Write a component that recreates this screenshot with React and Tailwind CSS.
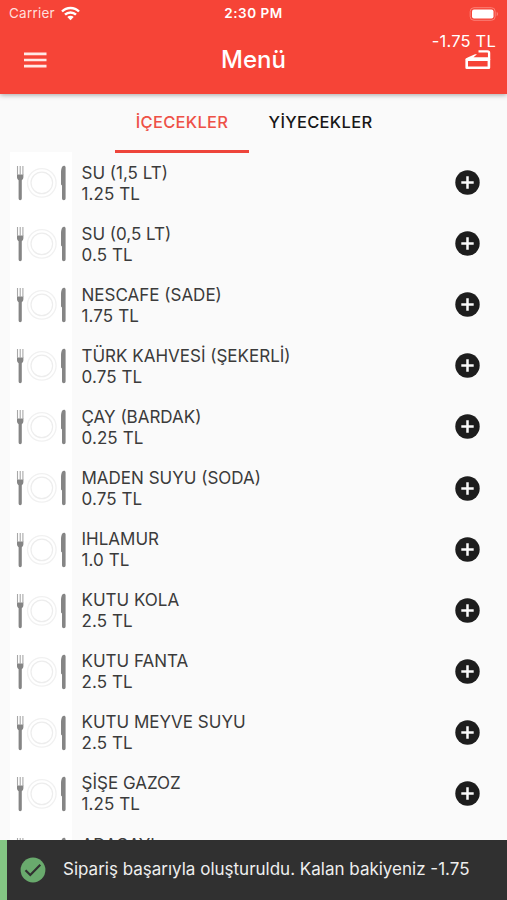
const drinks = [
  ['SU (1,5 LT)', '1.25 TL'],
  ['SU (0,5 LT)', '0.5 TL'],
  ['NESCAFE (SADE)', '1.75 TL'],
  ['TÜRK KAHVESİ (ŞEKERLİ)', '0.75 TL'],
  ['ÇAY (BARDAK)', '0.25 TL'],
  ['MADEN SUYU (SODA)', '0.75 TL'],
  ['IHLAMUR', '1.0 TL'],
  ['KUTU KOLA', '2.5 TL'],
  ['KUTU FANTA', '2.5 TL'],
  ['KUTU MEYVE SUYU', '2.5 TL'],
  ['ŞİŞE GAZOZ', '1.25 TL'],
  ['ADAÇAYI', ''],
];

function PlateImage() {
  return (
    <svg className="h-full w-[62px] shrink-0 bg-white" viewBox="0 0 62 61" fill="none">
      <g fill="#858585">
        <path d="M7 22.500h6.400v2.500c0 1.800-.9 2.800-1.600 3.200V46.500q0 1.700-1.600 1.700t-1.600-1.700V28.200c-.7-.4-1.600-1.400-1.600-3.200z" />
        <path d="M51 32.500V20c.3-3.500 1-6.300 2.900-6.300 1 0 1.700.7 1.700 1.700v31.100q0 1.700-1.800 1.700T52 46.500V33.500z" />
      </g>
      <path d="M7.500 14V23M10.200 14V23M12.900 14V23" stroke="#a8a8a8" strokeWidth="1.1" />
      <circle cx="31.800" cy="30.800" r="14.300" stroke="#f1f1f1" strokeWidth="1.300" />
      <circle cx="31.800" cy="30.800" r="10.800" stroke="#ededed" strokeWidth="1.200" />
    </svg>
  );
}

function AddButton() {
  return (
    <button className="shrink-0" aria-label="Ekle">
      <svg className="block size-[25px]" viewBox="0 0 25 25">
        <circle cx="12.500" cy="12.500" r="12.200" fill="#1d1d1d" />
        <path d="M12.500 6.300v12.400M6.300 12.500h12.400" stroke="#fafafa" strokeWidth="2.500" />
      </svg>
    </button>
  );
}

function StatusBar() {
  return (
    <div className="grid h-[27px] grid-cols-3 items-center px-[9px] text-[13.500px] leading-none">
      <div className="flex items-center gap-[6px] text-[#ffdfdc]">
        <span className="tracking-[0.220px]">Carrier</span>
        <svg className="h-[15px] w-[19px]" viewBox="0 0 19 15" fill="none" stroke="#fff" strokeWidth="2.400">
          <path d="M1 5.500a12 12 0 0 1 17 0" />
          <path d="M4 8.700a7.800 7.800 0 0 1 11 0" />
          <path d="M9.500 14.200 6.300 11a4.500 4.500 0 0 1 6.400 0z" fill="#fff" stroke="none" />
        </svg>
      </div>
      <span className="pt-px text-center font-semibold tracking-[0.550px]">2:30 PM</span>
      <svg className="mr-[-1px] h-[14px] w-[30px] justify-self-end" viewBox="0 0 30 14" fill="none">
        <rect x="1.200" y=".7" width="25" height="12.600" rx="3.800" stroke="#fb8077" strokeWidth="1" />
        <rect x="3" y="2.500" width="21.500" height="9" rx="2" fill="#fff" />
        <path d="M27.700 4.800c1.800.7 1.800 3.700 0 4.400z" fill="#fb8077" />
      </svg>
    </div>
  );
}

export default function App() {
  return (
    <div className="relative flex h-[900px] w-[507px] flex-col overflow-hidden bg-[#fafafa] font-['Inter','Liberation_Sans',sans-serif]">
      <header className="z-10 h-[94px] shrink-0 bg-[#f64437] text-white shadow-[0_1px_5px_rgba(0,0,0,0.35)]">
        <StatusBar />
        <div className="grid h-[66px] grid-cols-3 items-center px-6">
          <svg className="h-[16px] w-[23px]" viewBox="0 0 23 16" stroke="#ffe9e6" strokeWidth="2.600">
            <path d="M0 1.900h22.500M0 8h22.500M0 14.100h22.500" />
          </svg>
          <h1 className="text-center text-[24px] font-medium">Menü</h1>
          <div className="relative h-full">
            <svg className="absolute top-[22px] right-[-8px] h-[21px] w-[26px]" viewBox="0 0 26 21" fill="none" stroke="#fff" strokeLinejoin="round">
              <path d="M1.700 10.600h22.200v8.200H1.700z" strokeWidth="2.600" />
              <path d="M13.500 2.300h9q1.600 0 1.600 1.600V11" strokeWidth="2.300" />
              <path d="M.6 11q.2-1.600 2-2.500l7.400-3.300h2L8.500 8.200H24v3z" fill="#fff" stroke="none" />
            </svg>
            <span className="absolute top-[4px] right-[-13px] text-[16.500px] leading-[20px] tracking-[0.200px] whitespace-nowrap">-1.75 TL</span>
          </div>
        </div>
      </header>

      <nav className="flex h-[59px] shrink-0 justify-center text-[16.500px] font-medium tracking-[0.300px]">
        <button className="h-full w-[134px] border-b-[3px] border-[#ee453b] text-[#ee5147]">İÇECEKLER</button>
        <button className="h-full w-[143px] border-b-[3px] border-transparent text-[#171717]">YİYECEKLER</button>
      </nav>

      <main className="-mt-px min-h-0 flex-1">
        {drinks.map(([name, price]) => (
          <div key={name} className="flex h-[61.100px] items-center pr-[27px] pl-[10px]">
            <PlateImage />
            <div className="ml-[9.500px] h-[42px] flex-1 translate-y-[0.500px] text-[17px] leading-[21px] text-[#3b3b3b]">
              <p>{name}</p>
              {price && <p className="tracking-[0.100px]">{price}</p>}
            </div>
            <AddButton />
          </div>
        ))}
      </main>

      <div className="absolute inset-x-0 bottom-0 flex h-[60px] items-center border-l-[7px] border-[#83c683] bg-[#303030]">
        <svg className="ml-[13px] size-[26px]" viewBox="0 0 26 26">
          <circle cx="13" cy="13" r="12.400" fill="#69aa6d" />
          <path d="m5.500 13.200 4.800 4.800L20.300 7.800" fill="none" stroke="#303030" strokeWidth="2.200" />
        </svg>
        <p className="ml-[17px] text-[17px] whitespace-nowrap text-[#eeeeee]">Sipariş başarıyla oluşturuldu. Kalan bakiyeniz -1.75</p>
      </div>
    </div>
  );
}
